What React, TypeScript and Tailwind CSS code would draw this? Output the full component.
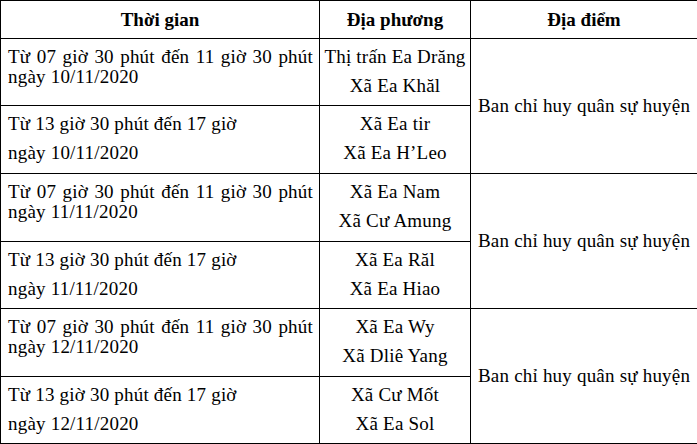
import React from 'react';

type Row = {
  time: string[];
  wrap: boolean;
  places: string[];
};

const rows: Row[] = [
  { time: ['Từ 07 giờ 30 phút đến 11 giờ 30 phút ngày 10/11/2020'], wrap: true, places: ['Thị trấn Ea Drăng', 'Xã Ea Khăl'] },
  { time: ['Từ 13 giờ 30 phút đến 17 giờ', 'ngày 10/11/2020'], wrap: false, places: ['Xã Ea tir', 'Xã Ea H’Leo'] },
  { time: ['Từ 07 giờ 30 phút đến 11 giờ 30 phút ngày 11/11/2020'], wrap: true, places: ['Xã Ea Nam', 'Xã Cư Amung'] },
  { time: ['Từ 13 giờ 30 phút đến 17 giờ', 'ngày 11/11/2020'], wrap: false, places: ['Xã Ea Răl', 'Xã Ea Hiao'] },
  { time: ['Từ 07 giờ 30 phút đến 11 giờ 30 phút ngày 12/11/2020'], wrap: true, places: ['Xã Ea Wy', 'Xã Dliê Yang'] },
  { time: ['Từ 13 giờ 30 phút đến 17 giờ', 'ngày 12/11/2020'], wrap: false, places: ['Xã Cư Mốt', 'Xã Ea Sol'] },
];

export default function App() {
  return (
    <div className="w-[697px] h-[444px] overflow-hidden bg-white text-black font-[Liberation_Serif,Times_New_Roman,serif] text-[19px]">
      <div className="grid grid-cols-[319px_151px_226px] grid-rows-[38px_67px_68px_68px_67px_68px_67px] border-t border-l border-black">
        <div className="flex items-center justify-center border-r border-b border-black font-bold leading-[22px]">Thời gian</div>
        <div className="flex items-center justify-center border-r border-b border-black font-bold leading-[22px]">Địa phương</div>
        <div className="flex items-center justify-center border-b border-black font-bold leading-[22px]">Địa điểm</div>

        {rows.map((row, i) => (
          <React.Fragment key={i}>
            {row.wrap ? (
              <div className="border-r border-b border-black pl-[7px] pr-[6px] pt-[8px] leading-[20px] tracking-[0.2px] text-justify">
                {row.time[0]}
              </div>
            ) : (
              <div className="border-r border-b border-black pl-[7px] pr-[6px] pt-[3px] leading-[29px] tracking-[0.2px]">
                {row.time.map((t) => (
                  <div key={t}>{t}</div>
                ))}
              </div>
            )}
            <div className="border-r border-b border-black pt-[3px] leading-[29px] tracking-[0.2px] text-center">
              {row.places.map((p) => (
                <div key={p}>{p}</div>
              ))}
            </div>
            {i % 2 === 0 && (
              <div className="row-span-2 flex items-center border-b border-black pl-[7px] leading-[22px] tracking-[0.2px]">
                Ban chỉ huy quân sự huyện
              </div>
            )}
          </React.Fragment>
        ))}
      </div>
    </div>
  );
}
